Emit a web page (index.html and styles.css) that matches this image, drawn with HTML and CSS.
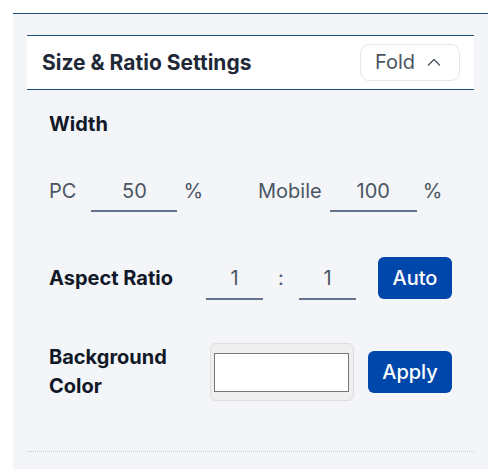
FILE: index.html
```html
<!DOCTYPE html>
<html lang="en">
<head>
<meta charset="utf-8">
<title>Size &amp; Ratio Settings</title>
<link rel="stylesheet" href="styles.css">
</head>
<body>
<div class="panel">
  <div class="header">
    <h2 class="title">Size &amp; Ratio Settings</h2>
    <button class="fold"><span>Fold</span>
      <svg class="chev" width="14" height="14" viewBox="0 0 14 14"><path d="M1.5 10 L7 4.5 L12.5 10" fill="none" stroke="#4b5563" stroke-width="1.4" stroke-linecap="round" stroke-linejoin="round"/></svg>
    </button>
  </div>
  <div class="content">
    <div class="label">Width</div>
    <div class="row width-row">
      <span class="muted pc">PC</span>
      <input class="line-input w86" type="text" value="50">
      <span class="muted pct">%</span>
      <span class="muted mobile">Mobile</span>
      <input class="line-input w87" type="text" value="100">
      <span class="muted pct">%</span>
    </div>
    <div class="row ratio-row">
      <span class="label ratio-label">Aspect Ratio</span>
      <input class="line-input w57" type="text" value="1">
      <span class="muted colon">:</span>
      <input class="line-input w57" type="text" value="1">
      <button class="btn auto">Auto</button>
    </div>
    <div class="row color-row">
      <span class="label color-label">Background<br>Color</span>
      <div class="color-box"><div class="swatch"></div></div>
      <button class="btn apply">Apply</button>
    </div>
    <div class="dotted"></div>
  </div>
</div>
</body>
</html>
```
FILE: styles.css
```css
* { box-sizing: border-box; }
html, body { margin: 0; padding: 0; background: #ffffff; }
body {
  font-family: Inter, "Noto Sans", "Liberation Sans", sans-serif;
  height: 469px;
  overflow: hidden;
}
.panel {
  margin: 13px 10px 0 13px;
  height: 456px;
  background: #f3f5f8;
  border-top: 1px solid #1d4f7c;
  padding: 21px 14px 0 14px;
}
.header {
  height: 55px;
  background: #ffffff;
  border-top: 1px solid #1d4f7c;
  border-bottom: 1px solid #1d4f7c;
  display: flex;
  align-items: center;
  justify-content: space-between;
  padding: 0 14px 0 15px;
}
.title {
  margin: 0;
  font-size: 21px;
  font-weight: 700;
  color: #1f2937;
  line-height: 28px;
}
.fold {
  width: 100px;
  height: 37px;
  margin-top: -1px;
  background: #ffffff;
  border: 1px solid #e5e7eb;
  border-radius: 9px;
  font-family: inherit;
  font-size: 20px;
  color: #4b5563;
  display: flex;
  align-items: center;
  justify-content: flex-start;
  gap: 12px;
  padding: 0 0 0 14px;
}
.chev { display: block; }
.content { padding: 20px 0 0 22px; }
.label {
  font-size: 20px;
  font-weight: 700;
  color: #111827;
  line-height: 28px;
}
.muted { font-size: 20px; color: #4b5563; line-height: 28px; }
.row { display: flex; align-items: baseline; }
.width-row { margin-top: 38px; }
.line-input {
  height: 36px;
  border: 0;
  border-bottom: 2px solid #64748b;
  background: transparent;
  font-family: inherit;
  font-size: 20px;
  color: #4b5563;
  text-align: center;
  padding: 0 0 5px 0;
  outline: none;
}
.w86 { width: 86px; margin-left: 15px; }
.w87 { width: 87px; margin-left: 8px; }
.w57 { width: 57px; }
.pct { margin-left: 6px; }
.mobile { margin-left: 55px; }
.ratio-row { margin-top: 45px; }
.ratio-label { width: 157px; }
.colon { width: 36px; text-align: center; }
.btn {
  background: #0047ab;
  color: #ffffff;
  border: 0;
  border-radius: 6px;
  font-family: inherit;
  font-size: 20px;
  font-weight: 500;
  height: 42px;
  padding: 0;
}
.auto { width: 74px; margin-left: 22px; }
.color-row { margin-top: 43px; height: 58px; align-items: center; }
.color-label { width: 161px; line-height: 29px; }
.color-box {
  width: 144px;
  height: 58px;
  background: #efefef;
  border: 1px solid #dedede;
  border-radius: 6px;
  padding: 9px 4px 8px 3px;
}
.swatch {
  width: 100%;
  height: 100%;
  background: #ffffff;
  border: 1px solid #767676;
}
.apply { width: 84px; margin-left: 14px; }
.dotted {
  margin: 50px 0 0 -22px;
  border-top: 1px dotted #c4c8ce;
}
```
